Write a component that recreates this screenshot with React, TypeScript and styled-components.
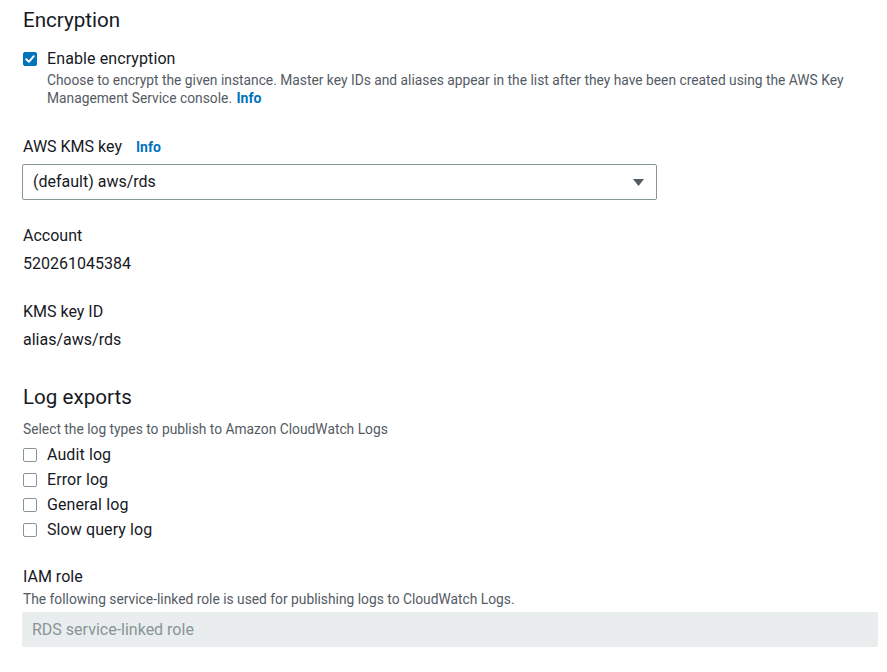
import React from "react";
import styled, { createGlobalStyle } from "styled-components";

const Global = createGlobalStyle`
  html, body { margin: 0; padding: 0; background: #ffffff; }
  body { font-family: Roboto, "Noto Sans", sans-serif; color: #16191f; }
  * { box-sizing: border-box; }
`;

const Page = styled.div`
  padding: 0 9px 0 22px;
  display: flex;
  flex-direction: column;
`;

const Heading = styled.h2<{ $mt: number }>`
  margin: ${(p) => p.$mt}px 0 0 0;
  font-size: 20.6px;
  line-height: 28px;
  font-weight: 400;
  color: #16191f;
  padding-left: 1px;
`;

const CheckRow = styled.label<{ $mt: number }>`
  display: flex;
  align-items: center;
  gap: 10px;
  margin-top: ${(p) => p.$mt}px;
  font-size: 16px;
  line-height: 20px;
  letter-spacing: 0.1px;
  color: #16191f;
  padding-left: 1px;
`;

const Box = styled.span<{ $checked?: boolean }>`
  width: 14px;
  height: 14px;
  border-radius: 2px;
  flex: none;
  display: inline-flex;
  align-items: center;
  justify-content: center;
  background: ${(p) => (p.$checked ? "#0073bb" : "#ffffff")};
  border: 1px solid ${(p) => (p.$checked ? "#0073bb" : "#879596")};
`;

const Desc = styled.div<{ $mt: number; $indent?: number }>`
  margin-top: ${(p) => p.$mt}px;
  margin-left: ${(p) => p.$indent ?? 0}px;
  font-size: 13.8px;
  line-height: 18px;
  color: #545b64;
  padding-left: 1px;
`;

const InfoLink = styled.a`
  color: #0073bb;
  font-weight: 700;
  font-size: 14px;
  line-height: 18px;
  margin-left: 1px;
  text-decoration: none;
`;

const Label = styled.div<{ $mt: number }>`
  margin-top: ${(p) => p.$mt}px;
  font-size: 16px;
  line-height: 20px;
  color: #16191f;
  padding-left: 1px;
  display: flex;
  align-items: baseline;
  gap: 13px;
`;

const Value = styled.div`
  margin-top: 8px;
  font-size: 16px;
  line-height: 20px;
  color: #16191f;
  padding-left: 1px;
`;

const Select = styled.div`
  margin-top: 7px;
  width: 635px;
  height: 36px;
  border: 1px solid #879596;
  border-radius: 2px;
  display: flex;
  align-items: center;
  justify-content: space-between;
  padding: 0 12px 0 10px;
  font-size: 16px;
  line-height: 20px;
  color: #16191f;
`;

const CheckList = styled.div`
  margin-top: 7px;
  display: flex;
  flex-direction: column;
  gap: 5px;
`;

const DisabledInput = styled.div`
  margin-top: 4px;
  height: 35px;
  background: #eaeded;
  border-radius: 2px;
  display: flex;
  align-items: center;
  padding: 0 10px;
  font-size: 16px;
  line-height: 20px;
  color: #879596;
`;

const Check = () => (
  <svg width="12" height="12" viewBox="0 0 12 12">
    <path d="M2.2 6.2 L4.9 8.8 L9.8 3.2" fill="none" stroke="#fff" strokeWidth="2" strokeLinecap="round" strokeLinejoin="round" />
  </svg>
);

const Caret = () => (
  <svg width="11" height="7" viewBox="0 0 11 7">
    <path d="M0 0 H11 L5.5 7 Z" fill="#545b64" />
  </svg>
);

const logs = ["Audit log", "Error log", "General log", "Slow query log"];

export default function App() {
  return (
    <>
      <Global />
      <Page>
        <Heading $mt={6}>Encryption</Heading>
        <CheckRow $mt={15}>
          <Box $checked>
            <Check />
          </Box>
          Enable encryption
        </CheckRow>
        <Desc $mt={2} $indent={24}>
          Choose to encrypt the given instance. Master key IDs and aliases appear in the list after they have been created using the AWS Key
          Management Service console. <InfoLink href="#">Info</InfoLink>
        </Desc>
        <Label $mt={30}>
          AWS KMS key <InfoLink href="#">Info</InfoLink>
        </Label>
        <Select>
          <span>(default) aws/rds</span>
          <Caret />
        </Select>
        <Label $mt={26}>Account</Label>
        <Value>520261045384</Value>
        <Label $mt={28}>KMS key ID</Label>
        <Value>alias/aws/rds</Value>
        <Heading $mt={33}>Log exports</Heading>
        <Desc $mt={9}>Select the log types to publish to Amazon CloudWatch Logs</Desc>
        <CheckList>
          {logs.map((l) => (
            <CheckRow key={l} $mt={0}>
              <Box />
              {l}
            </CheckRow>
          ))}
        </CheckList>
        <Label $mt={27}>IAM role</Label>
        <Desc $mt={3}>The following service-linked role is used for publishing logs to CloudWatch Logs.</Desc>
        <DisabledInput>RDS service-linked role</DisabledInput>
      </Page>
    </>
  );
}
